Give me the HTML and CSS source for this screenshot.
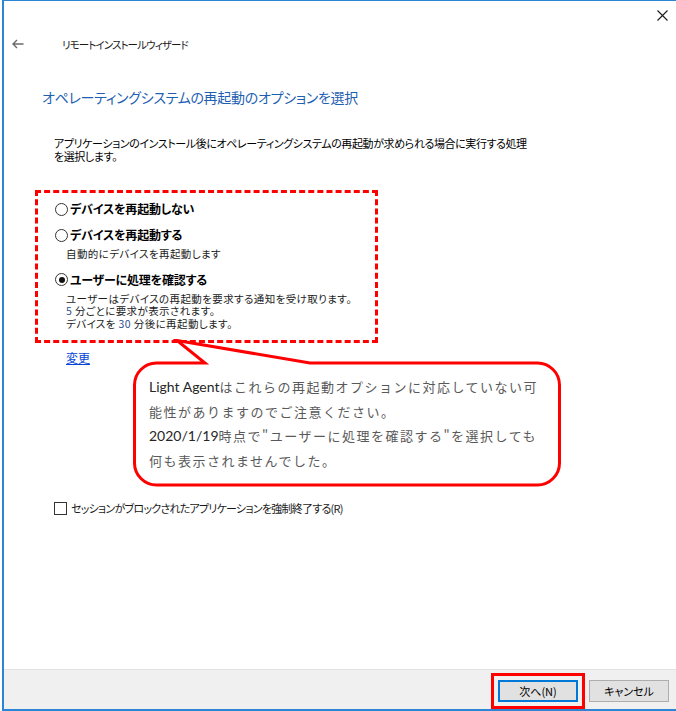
FILE: index.html
```html
<!DOCTYPE html>
<html lang="ja">
<head>
    <meta charset="UTF-8">
    <title>リモートインストールウィザード</title>
    <link rel="stylesheet" href="styles.css">
</head>
<body>
    <div class="window">
        <!-- title bar with close button -->
        <div class="titlebar">
            <svg class="close" width="11" height="11" viewBox="0 0 11 11">
                <path d="M0.5 0.5 L10.5 10.5 M10.5 0.5 L0.5 10.5" stroke="#1a1a1a" stroke-width="1.1" fill="none"/>
            </svg>
        </div>

        <div class="nav">
            <svg class="back" width="12" height="10" viewBox="0 0 12 10">
                <path d="M11.5 5 H1.2 M5 1 L1 5 L5 9" stroke="#6b6b6b" stroke-width="1.4" fill="none"/>
            </svg>
            <span class="wizard-title">リモートインストールウィザード</span>
        </div>

        <div class="page">
            <h1 class="heading">オペレーティングシステムの再起動のオプションを選択</h1>
            <p class="desc">アプリケーションのインストール後にオペレーティングシステムの再起動が求められる場合に実行する処理<br>を選択します。</p>

            <div class="options">
                <div class="option">
                    <span class="radio"></span>
                    <span class="option-label">デバイスを再起動しない</span>
                </div>
                <div class="option">
                    <span class="radio"></span>
                    <span class="option-label">デバイスを再起動する</span>
                </div>
                <p class="sub">自動的にデバイスを再起動します</p>
                <div class="option">
                    <span class="radio checked"></span>
                    <span class="option-label">ユーザーに処理を確認する</span>
                </div>
                <p class="sub">ユーザーはデバイスの再起動を要求する通知を受け取ります。<br><span class="num">5</span> 分ごとに要求が表示されます。<br>デバイスを <span class="num">30</span> 分後に再起動します。</p>
            </div>

            <a class="change-link" href="#">変更</a>

            <div class="check-row">
                <span class="checkbox"></span>
                <span>セッションがブロックされたアプリケーションを強制終了する(R)</span>
            </div>
        </div>

        <div class="footer">
            <button class="btn btn-default">次へ(N)</button>
            <button class="btn">キャンセル</button>
        </div>
    </div>

    <!-- annotation balloon over the dialog -->
    <div class="callout">
        <svg class="callout-shape" width="430" height="150" viewBox="0 0 430 150">
            <path d="M23.5 24 H72 L44 1.5 L177 24 H404.5 A22 22 0 0 1 426.5 46 V124 A22 22 0 0 1 404.5 146 H23.5 A22 22 0 0 1 1.5 124 V46 A22 22 0 0 1 23.5 24 Z" stroke="#ff0000" stroke-width="3" fill="none"/>
        </svg>
        <p class="callout-text"><span class="latin">Light Agent</span>はこれらの再起動オプションに対応していない可<br>能性がありますのでご注意ください。<br><span class="latin">2020/1/19</span>時点で"ユーザーに処理を確認する"を選択しても<br>何も表示されませんでした。</p>
    </div>
</body>
</html>
```

FILE: styles.css
```css
body {
    margin: 0;
    position: relative;
    font-family: "Noto Sans CJK JP", sans-serif;
    font-feature-settings: "palt";
    color: #000;
    background-color: #fff;
}
p, h1 {
    margin: 0;
}
.window {
    display: flex;
    flex-direction: column;
    width: 674px;
    height: 711px;
    margin-left: 2px;
    box-sizing: border-box;
    border-top: 1px solid #2b86d6;
    border-left: 2px solid #2b86d6;
    border-bottom: 2px solid #2b86d6;
}
.titlebar {
    display: flex;
    justify-content: flex-end;
    align-items: center;
    height: 28px;
    padding-right: 8px;
}
.nav {
    display: flex;
    align-items: center;
    height: 30px;
}
.back {
    margin-left: 8px;
}
.wizard-title {
    margin-left: 38px;
    font-size: 10.5px;
    letter-spacing: -0.9px;
    color: #1a1a1a;
}
.heading {
    margin: 28px 0 0 38px;
    font-size: 14px;
    font-weight: normal;
    line-height: 20px;
    letter-spacing: -0.3px;
    color: #1f5fb2;
}
.desc {
    margin: 30px 0 0 50px;
    font-size: 11px;
    line-height: 13px;
    letter-spacing: -0.4px;
    white-space: nowrap;
}
.options {
    width: 343px;
    box-sizing: border-box;
    margin: 27px 0 0 31px;
    padding: 8px 0 10px 0;
    border: 3px dashed #ff0000;
}
.option {
    display: flex;
    align-items: center;
    height: 16px;
    padding-left: 17px;
}
.option + .option {
    margin-top: 10px;
}
.sub + .option {
    margin-top: 11px;
}
.radio {
    position: relative;
    width: 11px;
    height: 11px;
    border: 1px solid #333;
    border-radius: 50%;
    margin-right: 2px;
}
.radio.checked::after {
    content: "";
    position: absolute;
    left: 2.5px;
    top: 2.5px;
    width: 6px;
    height: 6px;
    border-radius: 50%;
    background-color: #111;
}
.option-label {
    font-size: 12px;
    font-weight: bold;
    line-height: 16px;
    letter-spacing: -0.2px;
}
.sub {
    margin: 5px 0 0 28px;
    font-size: 10.5px;
    line-height: 12.5px;
    letter-spacing: 0.4px;
    color: #1a1a1a;
    white-space: nowrap;
}
.num {
    color: #2a4f8a;
}
.change-link {
    display: inline-block;
    align-self: flex-start;
    margin: 8px 0 0 62px;
    font-size: 12px;
    line-height: 14px;
    color: #0645d6;
}
.check-row {
    display: flex;
    align-items: center;
    margin: 136px 0 0 50px;
    font-size: 11px;
    line-height: 14px;
    letter-spacing: -0.75px;
    color: #1a1a1a;
}
.checkbox {
    width: 11px;
    height: 11px;
    border: 1px solid #333;
    margin-right: 4px;
}
.page {
    display: flex;
    flex-direction: column;
}
.footer {
    display: flex;
    justify-content: flex-end;
    gap: 11px;
    height: 40px;
    margin-top: auto;
    padding: 10px 7px 0 0;
    box-sizing: border-box;
    background-color: #f0f0f0;
    border-top: 1px solid #e2e2e2;
}
.btn {
    width: 80px;
    height: 22px;
    padding: 0;
    font-family: "Noto Sans CJK JP", sans-serif;
    font-feature-settings: "palt";
    font-size: 11px;
    color: #000;
    background-color: #e1e1e1;
    border: 1px solid #adadad;
}
.btn-default {
    border-color: #0078d7;
    box-shadow: inset 0 0 0 1px #0078d7;
    outline: 3px solid #ff0000;
    outline-offset: 4px;
}
.callout {
    position: absolute;
    left: 133px;
    top: 339px;
    width: 430px;
    height: 150px;
}
.callout-shape {
    position: absolute;
    left: 0;
    top: 0;
}
.callout-text {
    position: relative;
    padding: 36px 0 0 16px;
    font-size: 13px;
    line-height: 24.7px;
    letter-spacing: 1.5px;
    font-feature-settings: normal;
    color: #595959;
    white-space: nowrap;
}
.latin {
    font-family: "Lato", sans-serif;
    font-size: 14px;
    letter-spacing: 0;
    color: #262626;
}
```
